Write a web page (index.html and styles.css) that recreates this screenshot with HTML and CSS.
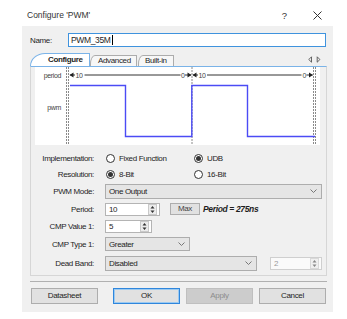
FILE: index.html
```html
<!DOCTYPE html>
<html lang="en">
<head>
  <meta charset="UTF-8" />
  <title>Configure 'PWM'</title>
  <link rel="stylesheet" href="styles.css">
</head>
<body>
  <div class="titlebar">
    <span class="title">Configure 'PWM'</span>
    <span class="help">?</span>
    <svg class="close" width="9" height="9" viewBox="0 0 9 9">
      <path d="M0.5 0.5 L8.5 8.5 M8.5 0.5 L0.5 8.5" stroke="#333" stroke-width="1" fill="none"/>
    </svg>
  </div>

  <div class="dialog">
    <div class="name-row">
      <label>Name:</label>
      <div class="name-input">PWM_35M<span class="caret"></span></div>
    </div>

    <div class="tabs">
      <div class="tab active">Configure</div>
      <div class="tab adv">Advanced</div>
      <div class="tab builtin">Built-in</div>
      <svg class="tab-arrows" width="13" height="7" viewBox="0 0 13 7">
        <path d="M3.5 0.8 L0.8 3.5 L3.5 6.2 Z" fill="none" stroke="#555" stroke-width="0.9"/>
        <path d="M9.2 0.8 L11.9 3.5 L9.2 6.2 Z" fill="none" stroke="#555" stroke-width="0.9"/>
      </svg>
    </div>

    <div class="page">
      <div class="wave">
        <svg width="285" height="78" viewBox="0 0 285 78">
          <g stroke="#8a8a8a" stroke-width="1" stroke-dasharray="2 1">
            <line x1="31.5" y1="0" x2="31.5" y2="78"/>
            <line x1="33.5" y1="0" x2="33.5" y2="78"/>
            <line x1="157" y1="0" x2="157" y2="78"/>
            <line x1="278.5" y1="0" x2="278.5" y2="78"/>
            <line x1="280.5" y1="0" x2="280.5" y2="78"/>
          </g>
          <g font-family="Liberation Sans, Arial, sans-serif" font-size="7" fill="#444">
            <text x="26" y="10.5" text-anchor="end">period</text>
            <text x="26" y="43" text-anchor="end">pwm</text>
            <text x="40.5" y="10.5">10</text>
            <text x="146" y="10.5">0</text>
            <text x="163.5" y="10.5">10</text>
            <text x="267.5" y="10.5">0</text>
          </g>
          <g stroke="#333" stroke-width="1">
            <line x1="35" y1="8" x2="40" y2="8"/>
            <line x1="49.5" y1="8" x2="145.5" y2="8"/>
            <line x1="150" y1="8" x2="156" y2="8"/>
            <line x1="158" y1="8" x2="163" y2="8"/>
            <line x1="172" y1="8" x2="266.5" y2="8"/>
            <line x1="271.5" y1="8" x2="277.5" y2="8"/>
          </g>
          <g fill="#222">
            <polygon points="34.5,8 38.5,5.5 38.5,10.5"/>
            <polygon points="156.5,8 152.5,5.5 152.5,10.5"/>
            <polygon points="157.5,8 161.5,5.5 161.5,10.5"/>
            <polygon points="278,8 274,5.5 274,10.5"/>
          </g>
          <path d="M35 18.5 H90.5 V69.5 H156.8 V18.5 H212.5 V69.5 H280" fill="none" stroke="#4b4bf5" stroke-width="1.4"/>
        </svg>
      </div>

      <div class="form">
        <label>Implementation:</label>
        <div class="radios">
          <span class="radio"><i class="dot"></i>Fixed Function</span>
          <span class="radio"><i class="dot on"></i>UDB</span>
        </div>

        <label>Resolution:</label>
        <div class="radios">
          <span class="radio"><i class="dot on"></i>8-Bit</span>
          <span class="radio"><i class="dot"></i>16-Bit</span>
        </div>

        <label>PWM Mode:</label>
        <div class="select w-mode">One Output<svg width="7" height="4" viewBox="0 0 7 4"><path d="M0.5 0.5 L3.5 3.5 L6.5 0.5" fill="none" stroke="#777"/></svg></div>

        <label>Period:</label>
        <div class="line">
          <div class="spin w-period">10<svg class="spin-btn" width="9" height="11" viewBox="0 0 9 11"><rect x="0.5" y="0.5" width="8" height="10" fill="#ececec" stroke="#c9c9c9"/><path d="M4.5 2 L6.5 4.5 H2.5 Z M4.5 9 L6.5 6.5 H2.5 Z" fill="#333"/></svg></div>
          <div class="btn-max">Max</div>
          <span class="period-note">Period = 275ns</span>
        </div>

        <label>CMP Value 1:</label>
        <div class="spin w-cmp">5<svg class="spin-btn" width="9" height="11" viewBox="0 0 9 11"><rect x="0.5" y="0.5" width="8" height="10" fill="#ececec" stroke="#c9c9c9"/><path d="M4.5 2 L6.5 4.5 H2.5 Z M4.5 9 L6.5 6.5 H2.5 Z" fill="#333"/></svg></div>

        <label>CMP Type 1:</label>
        <div class="select w-type">Greater<svg width="7" height="4" viewBox="0 0 7 4"><path d="M0.5 0.5 L3.5 3.5 L6.5 0.5" fill="none" stroke="#777"/></svg></div>

        <label>Dead Band:</label>
        <div class="line">
          <div class="select w-dead">Disabled<svg width="7" height="4" viewBox="0 0 7 4"><path d="M0.5 0.5 L3.5 3.5 L6.5 0.5" fill="none" stroke="#777"/></svg></div>
          <div class="spin w-band disabled">2<svg class="spin-btn" width="9" height="11" viewBox="0 0 9 11"><rect x="0.5" y="0.5" width="8" height="10" fill="#f0f0f0" stroke="#d9d9d9"/><path d="M4.5 2 L6.5 4.5 H2.5 Z M4.5 9 L6.5 6.5 H2.5 Z" fill="#888"/></svg></div>
        </div>
      </div>
    </div>

    <div class="sep"></div>

    <div class="buttons">
      <div class="btn datasheet">Datasheet</div>
      <div class="btn ok">OK</div>
      <div class="btn apply">Apply</div>
      <div class="btn">Cancel</div>
    </div>
  </div>
</body>
</html>
```

FILE: styles.css
```css
* { box-sizing: border-box; }
html, body { margin: 0; padding: 0; background: #fff; }
body {
  width: 347px; height: 319px; overflow: hidden;
  font-family: "Liberation Sans", Arial, sans-serif; font-size: 8px;
  letter-spacing: -0.35px; color: #1e1e1e;
}

/* title bar */
.titlebar {
  height: 26px; display: flex; align-items: flex-end;
  padding: 0 25px 5px 27px; font-size: 8.5px; color: #333; letter-spacing: 0;
}
.titlebar .title { flex: 1; line-height: 11px; }
.titlebar .help { margin-right: 26px; line-height: 11px; font-size: 9.5px; }
.titlebar .close { display: block; margin-bottom: 1px; }

/* dialog body */
.dialog {
  margin-left: 22px; width: 311px; height: 286px;
  background: #f0f0f0; padding: 7px 6px 0 8px;
}
.name-row { display: flex; align-items: center; height: 14px; }
.name-row label { width: 38px; }
.name-input {
  width: 258px; height: 14px; border: 1px solid #3f93de; background: #fff;
  padding: 0 2px; display: flex; align-items: center; font-size: 8.5px;
}
.caret { width: 1px; height: 10px; background: #000; margin-left: 1px; }

/* tabs */
.tabs { display: flex; align-items: flex-end; height: 13px; margin-top: 6px; }
.tab {
  height: 11px; border: 1px solid #acacac; border-bottom: 0;
  background: #f7f7f7; line-height: 10px; border-top-left-radius: 5px 9px;
}
.tab.active {
  width: 60px; height: 13px; padding-left: 17px; line-height: 12px;
  border-color: #7ab3e8; background: #fff; font-weight: bold;
  border-top-left-radius: 15px 13px;
}
.tab.adv { width: 47px; padding-left: 7px; }
.tab.builtin { width: 36px; margin-left: 1px; padding-left: 6px; }
.tab-arrows { margin-left: auto; margin-right: 6px; align-self: center; }

.page {
  height: 210px; border: 1px solid #d6d6d6; border-top-color: #7ab3e8;
  padding: 0 6px 0 4px;
}
.wave { width: 285px; height: 78px; background: #fff; }
.wave svg { display: block; }

/* form rows */
.form {
  margin-top: 5px; display: grid;
  grid-template-columns: 59px 1fr; column-gap: 11px;
  grid-template-rows: 16px 16px 18px 18px 17px 18px 20px;
  align-items: center;
}
.form label { text-align: right; }
.radios { display: grid; grid-template-columns: 88px auto; align-items: center; }
.radio { display: flex; align-items: center; }
.dot {
  width: 9px; height: 9px; border-radius: 50%; border: 1px solid #333;
  background: #fff; margin: 0 4px 0 1px; position: relative;
}
.dot.on::after {
  content: ""; position: absolute; left: 1px; top: 1px;
  width: 5px; height: 5px; border-radius: 50%; background: #333;
}
.line { display: flex; align-items: center; }

.select {
  height: 15px; border: 1px solid #adadad; background: #e5e5e5;
  display: flex; align-items: center; justify-content: space-between;
  padding: 0 4px 0 3px;
}
.select svg { display: block; }
.w-mode { width: 217px; }
.w-type { width: 85px; height: 14px; }
.w-dead { width: 152px; }

.spin {
  height: 13px; border: 1px solid #b4b4b4; background: #fff;
  display: flex; align-items: center; padding: 0 2px 0 3px;
}
.spin-btn { display: block; margin-left: auto; }
.w-period { width: 55px; }
.w-cmp { width: 47px; }
.w-band { width: 52px; margin-left: 13px; }
.spin.disabled { border-color: #cfcfcf; color: #9a9a9a; background: #fafafa; }

.btn-max {
  width: 30px; height: 12px; margin-left: 10px; border: 1px solid #adadad;
  background: #e1e1e1; text-align: center; line-height: 10px; color: #444;
}
.period-note { margin-left: 3px; font-weight: bold; font-style: italic; font-size: 8.5px; }

/* bottom */
.sep { margin-top: 5px; border-top: 1px solid #b0b0b0; }
.buttons { display: flex; margin-top: 6px; padding-left: 1px; gap: 6px; }
.btn {
  width: 67px; height: 16px; border: 1px solid #adadad; background: #e1e1e1;
  text-align: center; line-height: 14px;
}
.btn.datasheet { margin-right: 9px; }
.btn.ok { border-color: #2f86dc; box-shadow: inset 0 0 0 1px #9ccaf1; }
.btn.apply { background: #cccccc; border-color: #bfbfbf; color: #8d8d8d; }
```
